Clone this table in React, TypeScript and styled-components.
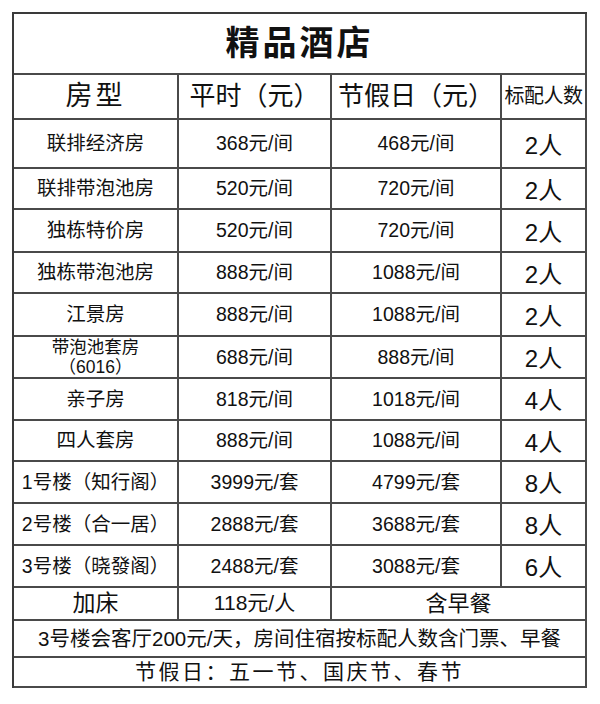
import React from 'react';
import styled, { createGlobalStyle } from 'styled-components';

interface IRoom {
  name: string[];
  normal: string;
  holiday: string;
  people: string;
}

const rooms: IRoom[] = [
  { name: ['联排经济房'], normal: '368元/间', holiday: '468元/间', people: '2人' },
  { name: ['联排带泡池房'], normal: '520元/间', holiday: '720元/间', people: '2人' },
  { name: ['独栋特价房'], normal: '520元/间', holiday: '720元/间', people: '2人' },
  { name: ['独栋带泡池房'], normal: '888元/间', holiday: '1088元/间', people: '2人' },
  { name: ['江景房'], normal: '888元/间', holiday: '1088元/间', people: '2人' },
  { name: ['带泡池套房', '（6016）'], normal: '688元/间', holiday: '888元/间', people: '2人' },
  { name: ['亲子房'], normal: '818元/间', holiday: '1018元/间', people: '4人' },
  { name: ['四人套房'], normal: '888元/间', holiday: '1088元/间', people: '4人' },
  { name: ['1号楼（知行阁）'], normal: '3999元/套', holiday: '4799元/套', people: '8人' },
  { name: ['2号楼（合一居）'], normal: '2888元/套', holiday: '3688元/套', people: '8人' },
  { name: ['3号楼（晓發阁）'], normal: '2488元/套', holiday: '3088元/套', people: '6人' },
];

// row pitches in px, from title down to the footer
const rowHeights = [61, 45, 49, 41, 43, 41, 43, 42, 42, 41, 42, 42, 42, 33, 37, 30];

const App: React.FC = () => {
  return (
    <>
      <GlobalStyle />
      <Page>
        <Sheet>
          <Cell $span={4} $size={34} $weight={700} $spacing={3}>
            精品酒店
          </Cell>
          <Cell $size={27} $spacing={3}>房型</Cell>
          <Cell $size={26}>平时（元）</Cell>
          <Cell $size={26}>节假日（元）</Cell>
          <Cell $size={20} $spacing={-0.5}>标配人数</Cell>
          {rooms.map((room) => (
            <React.Fragment key={room.name.join('')}>
              <Cell $size={19.5}>
                {room.name.length > 1 ? (
                  <Lines>
                    {room.name.map((line) => (
                      <span key={line}>{line}</span>
                    ))}
                  </Lines>
                ) : (
                  room.name[0]
                )}
              </Cell>
              <Cell $size={19.5}>{room.normal}</Cell>
              <Cell $size={19.5}>{room.holiday}</Cell>
              <Cell $size={24} $pt={4}>{room.people}</Cell>
            </React.Fragment>
          ))}
          <Cell $size={23}>加床</Cell>
          <Cell $size={21}>118元/人</Cell>
          <Cell $span={2} $size={22}>含早餐</Cell>
          <Cell $span={4} $size={20.5}>3号楼会客厅200元/天，房间住宿按标配人数含门票、早餐</Cell>
          <Cell $span={4} $size={21} $spacing={2.5}>节假日：五一节、国庆节、春节</Cell>
        </Sheet>
      </Page>
    </>
  );
};

export default App;

const GlobalStyle = createGlobalStyle`
  html, body {
    margin: 0;
    padding: 0;
    background: #fff;
  }
  body {
    font-family: 'Liberation Sans', 'Noto Sans CJK SC', sans-serif;
    color: #111;
  }
`;

const Page = styled.div`
  width: 600px;
  height: 704px;
  padding: 12px 0 0 12px;
  box-sizing: border-box;
`;

const Sheet = styled.div`
  display: grid;
  grid-template-columns: 165px 153px 170px 85px;
  grid-template-rows: ${rowHeights.map((h) => `${h}px`).join(' ')};
  width: 575px;
  box-sizing: border-box;
  border-left: 2px solid #3a3a3a;
  border-top: 2px solid #3a3a3a;
`;

interface ICellProps {
  $span?: number;
  $size: number;
  $weight?: number;
  $spacing?: number;
  $pt?: number;
}

const Cell = styled.div<ICellProps>`
  grid-column: span ${({ $span }) => $span ?? 1};
  display: flex;
  align-items: center;
  justify-content: center;
  box-sizing: border-box;
  border-right: 2px solid #4a4a4a;
  border-bottom: 2px solid #4a4a4a;
  padding-top: ${({ $pt }) => $pt ?? 0}px;
  font-size: ${({ $size }) => $size}px;
  font-weight: ${({ $weight }) => $weight ?? 400};
  letter-spacing: ${({ $spacing }) => $spacing ?? 0}px;
  white-space: nowrap;
  line-height: 1.15;
`;

const Lines = styled.div`
  display: flex;
  flex-direction: column;
  align-items: center;
  font-size: 17.5px;
  line-height: 20px;
`;
